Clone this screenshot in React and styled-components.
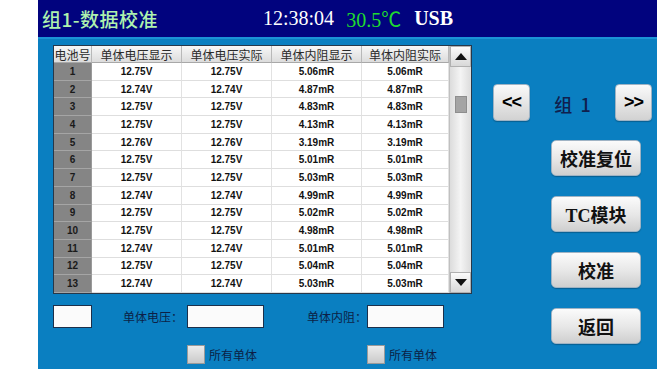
import styled, { createGlobalStyle } from "styled-components";

const GlobalStyle = createGlobalStyle`
  html, body {
    margin: 0;
    padding: 0;
    background: #ffffff;
  }
  * {
    box-sizing: border-box;
  }
`;

const rows = [
  ["1", "12.75V", "12.75V", "5.06mR", "5.06mR"],
  ["2", "12.74V", "12.74V", "4.87mR", "4.87mR"],
  ["3", "12.75V", "12.75V", "4.83mR", "4.83mR"],
  ["4", "12.75V", "12.75V", "4.13mR", "4.13mR"],
  ["5", "12.76V", "12.76V", "3.19mR", "3.19mR"],
  ["6", "12.75V", "12.75V", "5.01mR", "5.01mR"],
  ["7", "12.75V", "12.75V", "5.03mR", "5.03mR"],
  ["8", "12.74V", "12.74V", "4.99mR", "4.99mR"],
  ["9", "12.75V", "12.75V", "5.02mR", "5.02mR"],
  ["10", "12.75V", "12.75V", "4.98mR", "4.98mR"],
  ["11", "12.74V", "12.74V", "5.01mR", "5.01mR"],
  ["12", "12.75V", "12.75V", "5.04mR", "5.04mR"],
  ["13", "12.74V", "12.74V", "5.03mR", "5.03mR"],
];

const columns = ["电池号", "单体电压显示", "单体电压实际", "单体内阻显示", "单体内阻实际"];

const Screen = styled.div`
  width: 619px;
  height: 369px;
  margin-left: 38px;
  background: #0a7fc1;
  display: flex;
  flex-direction: column;
  overflow: hidden;
`;

const TopBar = styled.div`
  height: 39px;
  flex: none;
  background: #01037e;
  border-bottom: 2px solid #1b93d6;
  display: flex;
  align-items: center;
  padding-left: 4px;
  font-family: "Liberation Serif", "Noto Sans CJK SC", serif;
  font-size: 20px;
`;

const Title = styled.div`
  width: 221px;
  color: #aef2ae;
  font-family: "Noto Sans CJK SC", "Liberation Serif", sans-serif;
  font-weight: 500;
  font-size: 19px;
  letter-spacing: 0.5px;
`;

const Reading = styled.span`
  color: ${(p) => p.$color || "#ffffff"};
  margin-right: ${(p) => p.$gap || 0}px;
  font-weight: ${(p) => (p.$bold ? "bold" : "normal")};
`;

const Body = styled.div`
  flex: 1;
  display: flex;
`;

const LeftPane = styled.div`
  width: 434px;
  padding: 6px 0 0 15px;
  display: flex;
  flex-direction: column;
  gap: 11px;
`;

const Table = styled.div`
  width: 419px;
  height: 249px;
  border: 1px solid #26384a;
  background: #ffffff;
  display: flex;
`;

const Grid = styled.div`
  flex: 1;
  display: grid;
  grid-template-columns: 38px 90px 90px 90px 87px;
  grid-template-rows: 17px repeat(13, 1fr);
`;

const HeadCell = styled.div`
  background: linear-gradient(#f7f7f7, #dcdcdc);
  border-right: 1px solid #b8b8b8;
  border-bottom: 1px solid #a8a8a8;
  display: flex;
  align-items: center;
  justify-content: center;
  font-family: "Noto Sans CJK SC", sans-serif;
  font-size: 12px;
  color: #2a2a2a;
  white-space: nowrap;
  overflow: hidden;
`;

const Cell = styled.div`
  background: ${(p) => (p.$index ? "#858585" : "#ffffff")};
  border-right: 1px solid ${(p) => (p.$index ? "#9a9a9a" : "#e2e2e2")};
  border-bottom: 1px solid ${(p) => (p.$index ? "#a5a5a5" : "#dedede")};
  display: flex;
  align-items: center;
  justify-content: center;
  font-family: "Liberation Sans", Arial, sans-serif;
  font-weight: bold;
  font-size: 10px;
  color: ${(p) => (p.$index ? "#1a1a1a" : "#111111")};
`;

const ScrollBar = styled.div`
  width: 22px;
  display: flex;
  flex-direction: column;
  background: linear-gradient(90deg, #dcdcdc, #f4f4f4 50%, #dcdcdc);
  border-left: 1px solid #c0c0c0;
`;

const ScrollButton = styled.div`
  height: 21px;
  flex: none;
  background: linear-gradient(#fbfbfb, #d8d8d8);
  border: 1px solid #b0b0b0;
  display: flex;
  align-items: center;
  justify-content: center;
`;

const Track = styled.div`
  flex: 1;
  display: flex;
  justify-content: center;
`;

const Thumb = styled.div`
  width: 12px;
  height: 17px;
  margin-top: 29px;
  background: #a4a4a4;
  border: 1px solid #8e8e8e;
`;

const Form = styled.div`
  display: grid;
  grid-template-columns: 39px 95px 77px 103px 77px;
  grid-template-rows: 23px 19px;
  row-gap: 17px;
  align-items: center;
`;

const Field = styled.div`
  height: 23px;
  background: #fbfbfb;
  border: 1px solid #1c2f4a;
  grid-column: ${(p) => p.$col};
`;

const FieldLabel = styled.div`
  grid-column: ${(p) => p.$col};
  text-align: right;
  padding-right: ${(p) => p.$pad || 0}px;
  font-family: "Noto Sans CJK SC", sans-serif;
  font-size: 12px;
  color: #0c1f46;
`;

const CheckItem = styled.label`
  grid-column: ${(p) => p.$col};
  grid-row: 2;
  display: flex;
  align-items: center;
  gap: 4px;
  white-space: nowrap;
  font-family: "Noto Sans CJK SC", sans-serif;
  font-size: 12px;
  color: #0c1f46;
`;

const CheckBox = styled.span`
  width: 18px;
  height: 19px;
  background: linear-gradient(#ececec, #cacaca);
  border: 1px solid #9a9a9a;
`;

const RightPane = styled.div`
  flex: 1;
  padding: 45px 5px 0 21px;
  display: flex;
  flex-direction: column;
`;

const NavRow = styled.div`
  display: flex;
  align-items: center;
  justify-content: space-between;
  height: 37px;
`;

const NavButton = styled.div`
  width: 37px;
  height: 37px;
  border-radius: 4px;
  background: linear-gradient(#fafafa, #d2d2d2);
  border: 1px solid #9fb3c4;
  box-shadow: 0 1px 1px rgba(0, 0, 0, 0.25);
  display: flex;
  align-items: center;
  justify-content: center;
  font-family: "Liberation Sans", Arial, sans-serif;
  font-weight: bold;
  font-size: 18px;
  color: #000000;
  letter-spacing: -1px;
`;

const GroupLabel = styled.div`
  font-family: "Noto Sans CJK SC", "Liberation Serif", serif;
  font-weight: 500;
  font-size: 18px;
  color: #10204e;
  margin-top: 2px;
  word-spacing: 4px;
`;

const ActionList = styled.div`
  margin: 19px 0 0 58px;
  display: flex;
  flex-direction: column;
  gap: 20px;
`;

const ActionButton = styled.div`
  width: 90px;
  height: 36px;
  border-radius: 5px;
  background: linear-gradient(#fbfbfb, #e6e6e6 55%, #cfcfcf);
  border: 1px solid #9fb3c4;
  box-shadow: 0 1px 1px rgba(0, 0, 0, 0.25);
  display: flex;
  align-items: center;
  justify-content: center;
  font-family: "Liberation Serif", "Noto Sans CJK SC", serif;
  font-weight: bold;
  font-size: 18px;
  color: #111111;
`;

const Arrow = ({ down }) => (
  <svg width="12" height="7" viewBox="0 0 12 7">
    <polygon points={down ? "0,0 12,0 6,7" : "0,7 12,7 6,0"} fill="#111" />
  </svg>
);

function App() {
  return (
    <>
      <GlobalStyle />
      <Screen>
        <TopBar>
          <Title>组1-数据校准</Title>
          <Reading $gap={12}>12:38:04</Reading>
          <Reading $color="#1fdc2f" $gap={13}>
            30.5℃
          </Reading>
          <Reading $bold>USB</Reading>
        </TopBar>
        <Body>
          <LeftPane>
            <Table>
              <Grid>
                {columns.map((c) => (
                  <HeadCell key={c}>{c}</HeadCell>
                ))}
                {rows.map((r) =>
                  r.map((v, i) => (
                    <Cell key={r[0] + "-" + i} $index={i === 0}>
                      {v}
                    </Cell>
                  ))
                )}
              </Grid>
              <ScrollBar>
                <ScrollButton>
                  <Arrow />
                </ScrollButton>
                <Track>
                  <Thumb />
                </Track>
                <ScrollButton>
                  <Arrow down />
                </ScrollButton>
              </ScrollBar>
            </Table>
            <Form>
              <Field $col={1} />
              <FieldLabel $col={2} $pad={4}>
                单体电压：
              </FieldLabel>
              <Field $col={3} />
              <FieldLabel $col={4}>单体内阻：</FieldLabel>
              <Field $col={5} />
              <CheckItem $col={3}>
                <CheckBox />
                所有单体
              </CheckItem>
              <CheckItem $col={5}>
                <CheckBox />
                所有单体
              </CheckItem>
            </Form>
          </LeftPane>
          <RightPane>
            <NavRow>
              <NavButton>&lt;&lt;</NavButton>
              <GroupLabel>组 1</GroupLabel>
              <NavButton>&gt;&gt;</NavButton>
            </NavRow>
            <ActionList>
              <ActionButton>校准复位</ActionButton>
              <ActionButton>TC模块</ActionButton>
              <ActionButton>校准</ActionButton>
              <ActionButton>返回</ActionButton>
            </ActionList>
          </RightPane>
        </Body>
      </Screen>
    </>
  );
}

export default App;
